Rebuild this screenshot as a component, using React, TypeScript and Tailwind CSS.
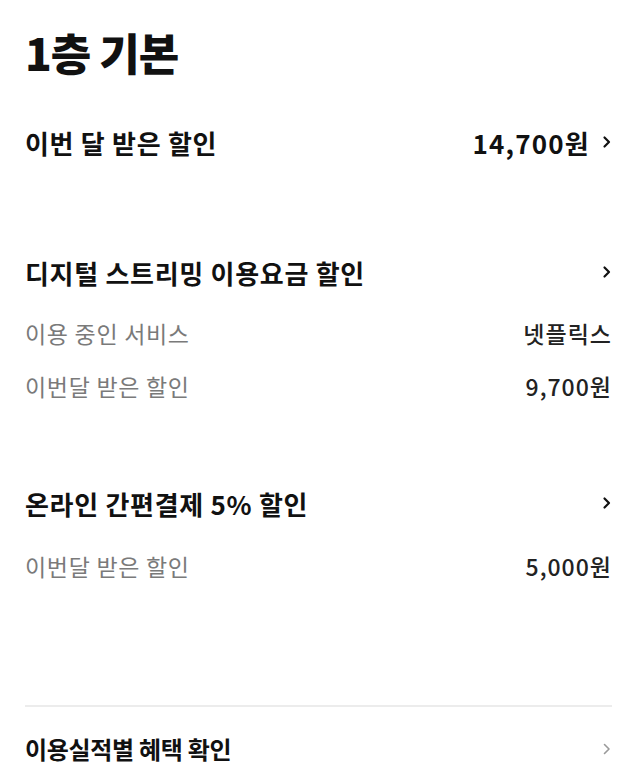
import { ReactNode } from 'react';

const font = { fontFamily: '"Noto Sans CJK KR", "Noto Sans", sans-serif' };

function Chevron({ gray = false }: { gray?: boolean }) {
  return (
    <svg width="10" height="14" viewBox="0 0 10 14" className="shrink-0">
      <polyline
        points="2.5,2.5 7,7 2.5,11.5"
        fill="none"
        stroke={gray ? '#9a9a9a' : '#111111'}
        strokeWidth={gray ? 1.6 : 2.2}
        strokeLinecap="round"
        strokeLinejoin="round"
      />
    </svg>
  );
}

function Heading({ title, right }: { title: string; right?: ReactNode }) {
  return (
    <div className="h-[56px] flex items-center justify-between">
      <span className="text-[26px] font-bold text-[#111] tracking-[0.7px]">{title}</span>
      <div className="flex items-center gap-3">
        {right}
        <Chevron />
      </div>
    </div>
  );
}

function SubRow({ label, value }: { label: string; value: string }) {
  return (
    <div className="h-[53px] flex items-center justify-between">
      <span className="text-[23px] text-[#7a7a7a] tracking-[0.7px]">{label}</span>
      <span className="text-[23px] text-[#222] font-medium tracking-[1px]">{value}</span>
    </div>
  );
}

export default function App() {
  return (
    <div className="min-h-screen bg-white pl-[25px] pr-[20px]" style={font}>
      {/* Title */}
      <div className="h-[104px] flex items-center">
        <h1 className="text-[44px] font-black text-[#111] tracking-[-1px]">1층 기본</h1>
      </div>

      {/* Total */}
      <div className="h-[76px] flex items-center justify-between">
        <span className="text-[26px] font-bold text-[#111] tracking-[0.7px]">이번 달 받은 할인</span>
        <div className="flex items-center gap-3">
          <span className="text-[26px] font-bold text-[#111] tracking-[1.2px]">14,700원</span>
          <Chevron />
        </div>
      </div>

      {/* Streaming */}
      <div className="mt-[64px]">
        <Heading title="디지털 스트리밍 이용요금 할인" />
        <div className="mt-[7px]">
          <SubRow label="이용 중인 서비스" value="넷플릭스" />
          <SubRow label="이번달 받은 할인" value="9,700원" />
        </div>
      </div>

      {/* Easy pay */}
      <div className="mt-[62px]">
        <Heading title="온라인 간편결제 5% 할인" />
        <div className="mt-[9px]">
          <SubRow label="이번달 받은 할인" value="5,000원" />
        </div>
      </div>

      {/* Footer link */}
      <div className="mt-[112px] border-t-2 border-[#ececec]">
        <div className="h-[84px] flex items-center justify-between">
          <span className="text-[24px] font-bold text-[#111] tracking-[-0.3px]">이용실적별 혜택 확인</span>
          <Chevron gray />
        </div>
      </div>
    </div>
  );
}
